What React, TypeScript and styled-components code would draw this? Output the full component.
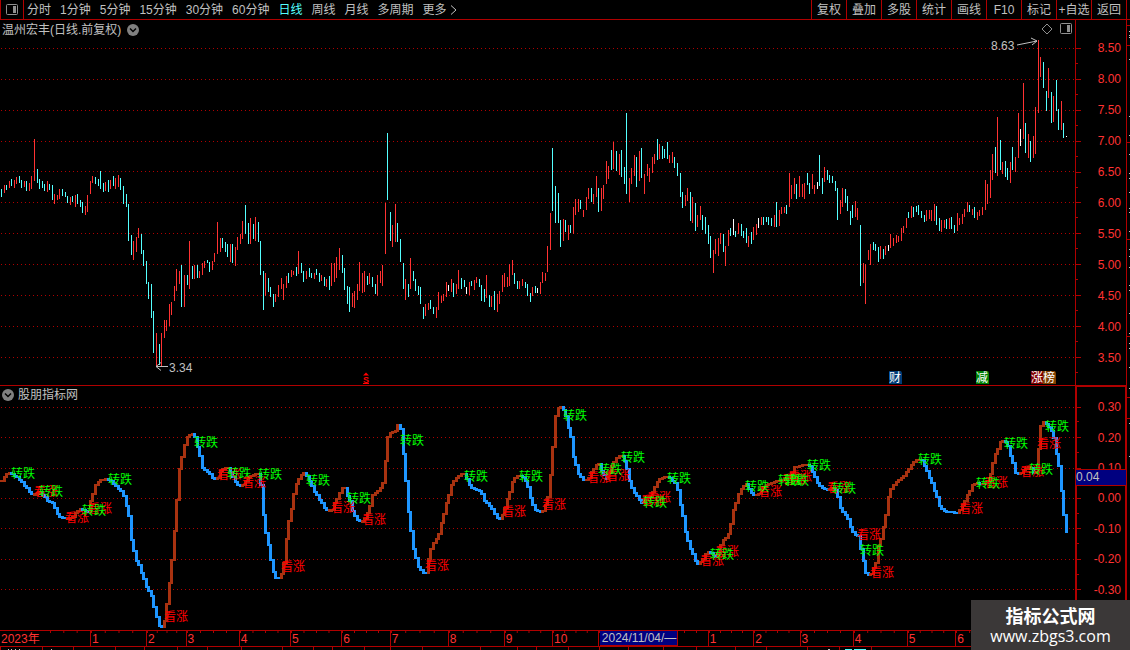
import styled, { createGlobalStyle } from 'styled-components'

const GlobalStyle = createGlobalStyle`
  * {
    box-sizing: border-box;
  }
  body {
    margin: 0;
    background: #000;
    color: #c0c0c0;
    font-family: 'Liberation Sans', 'Noto Sans CJK SC', sans-serif;
    font-size: 12px;
    line-height: 16px;
  }
  button {
    margin: 0;
    padding: 0;
    border: 0;
    background: none;
    color: inherit;
    font: inherit;
    white-space: nowrap;
    cursor: pointer;
  }
`

const line = '#b00000'

const Page = styled.div`
  position: relative;
  overflow: hidden;
`

const Toolbar = styled.header`
  display: flex;
  height: 20px;
  border-bottom: 1px solid ${line};
  padding-right: 3px;
`

const LayoutButton = styled.button`
  width: 24px;
  flex: none;
  display: flex;
  align-items: center;
  justify-content: center;
  border-left: 1px solid ${line};
  border-right: 1px solid ${line};
`

const Periods = styled.nav`
  flex: 1;
  display: flex;
  align-items: center;
  gap: 9px;
  padding-left: 3px;
`

const Period = styled.button<{ $active?: boolean }>`
  color: ${({ $active }) => ($active ? '#54ffff' : '#c0c0c0')};
`

const More = styled(Period)`
  display: flex;
  align-items: center;
  gap: 3px;
`

const Tools = styled.div`
  display: flex;
  border-right: 1px solid ${line};
`

const Tool = styled.button`
  width: 35px;
  border-left: 1px solid ${line};
`

const Body = styled.main`
  display: flex;
`

const Panels = styled.div`
  flex: 1;
  min-width: 0;
`

const Panel = styled.section`
  display: flex;
  &:first-child {
    border-bottom: 1px solid ${line};
  }
`

const Plot = styled.div`
  flex: 1;
  min-width: 0;
  position: relative;
  > svg {
    display: block;
    width: 100%;
    height: auto;
  }
`

const PlotTitle = styled.div<{ $reverse?: boolean }>`
  position: absolute;
  top: ${({ $reverse }) => ($reverse ? 1 : 2)}px;
  left: 2px;
  display: flex;
  flex-direction: ${({ $reverse }) => ($reverse ? 'row-reverse' : 'row')};
  align-items: center;
  gap: ${({ $reverse }) => ($reverse ? 4 : 6)}px;
`

const Fold = styled.button`
  display: flex;
`

const PlotTools = styled.div`
  position: absolute;
  top: 3px;
  right: 3px;
  display: flex;
  gap: 7px;
  > button {
    display: flex;
  }
`

const Axis = styled.ul<{ $thick?: boolean }>`
  position: relative;
  flex: none;
  width: 52px;
  margin: 0;
  padding: ${({ $thick }) => ($thick ? '5px 0 25px' : '13px 0 12px')};
  border: 0 solid ${line};
  border-width: ${({ $thick }) => ($thick ? '1px 2px 0 2px' : '0 1px')};
  list-style: none;
  display: flex;
  flex-direction: column;
`

const AxisRow = styled.li<{ $thick?: boolean }>`
  flex: 1;
  display: flex;
  align-items: center;
  justify-content: space-between;
  padding-right: ${({ $thick }) => ($thick ? 4 : 5)}px;
  color: #ff3232;
  background: linear-gradient(${line}, ${line}) left bottom / 2px 1px no-repeat;
  &::before {
    content: '';
    width: ${({ $thick }) => ($thick ? 4 : 5)}px;
    height: 1px;
    background: ${line};
  }
`

const Current = styled.li`
  position: absolute;
  top: 82px;
  left: 0;
  right: 0;
  height: 17px;
  line-height: 15px;
  margin: 0 -1px;
  border: 1px solid ${line};
  border-width: 1px 0;
  background: #000080;
`

const TimeAxis = styled.div`
  position: relative;
  display: flex;
  height: 17px;
  margin-right: 52px;
  border-top: 1px solid ${line};
  border-bottom: 1px solid ${line};
  color: #ff3232;
`

const Month = styled.div<{ $span: number; $ticks?: number; $open?: boolean }>`
  flex: ${({ $span }) => $span} 1 0;
  min-width: 0;
  padding-left: 1px;
  white-space: nowrap;
  border-left: ${({ $open }) => ($open ? '0' : `1px solid ${line}`)};
  background: ${({ $ticks }) =>
    $ticks
      ? `linear-gradient(90deg, ${line} 1px, transparent 1px) left top / ${100 / $ticks}% 2px repeat-x`
      : 'none'};
`

const DateMark = styled.time`
  position: absolute;
  top: -1px;
  left: 55.8%;
  height: 16px;
  padding: 0 1px 0 2px;
  border: 1px solid ${line};
  border-left: 0;
  line-height: 14px;
  color: #c0c0c0;
  background: #000080;
`

const Neighbour = styled.svg`
  display: block;
  flex: none;
`

const Watermark = styled.a`
  position: absolute;
  right: 0;
  bottom: 0;
  width: 159px;
  height: 50px;
  padding-top: 4px;
  background: #3b3838;
  color: #fff;
  text-align: center;
  text-decoration: none;
  font-family: 'Open Sans', 'Noto Sans', sans-serif;
  font-size: 16px;
  line-height: 20px;
  > strong {
    display: block;
    font-family: 'Noto Sans CJK SC', sans-serif;
    font-size: 18px;
    line-height: 22px;
  }
`

const periods = ['分时', '1分钟', '5分钟', '15分钟', '30分钟', '60分钟', '日线', '周线', '月线', '多周期']
const tools = ['复权', '叠加', '多股', '统计', '画线', 'F10', '标记', '+自选', '返回']
const prices = ['8.50', '8.00', '7.50', '7.00', '6.50', '6.00', '5.50', '5.00', '4.50', '4.00', '3.50']
const levels = ['0.30', '0.20', '0.10', '0.00', '-0.10', '-0.20', '-0.30']
const priceGrid = [28, 59, 90, 121, 151, 182, 213, 244, 275, 306, 337]
const levelGrid = [21, 51, 82, 112, 142, 173, 203]

const months: { label: string; span: number; ticks?: number; open?: boolean }[] = [
  { label: '2023年', span: 51, open: true },
  { label: '', span: 40, ticks: 3, open: true },
  { label: '1', span: 56, ticks: 4 },
  { label: '2', span: 39, ticks: 4 },
  { label: '3', span: 53, ticks: 4 },
  { label: '4', span: 51, ticks: 4 },
  { label: '5', span: 51, ticks: 4 },
  { label: '6', span: 48, ticks: 4 },
  { label: '7', span: 58, ticks: 4 },
  { label: '8', span: 56, ticks: 4 },
  { label: '9', span: 48, ticks: 4 },
  { label: '10', span: 46, ticks: 4 },
  { label: '', span: 62, ticks: 4 },
  { label: '', span: 48, ticks: 4, open: true },
  { label: '1', span: 45, ticks: 4 },
  { label: '2', span: 46, ticks: 4 },
  { label: '3', span: 53, ticks: 4 },
  { label: '4', span: 54, ticks: 4 },
  { label: '5', span: 48, ticks: 4 },
  { label: '6', span: 122, ticks: 9 },
]

// x top bottom colour
const bars = `
1 189 197 c,4 185 193 r,6 185 190 c,9 181 188 r,11 179 186 c,14 180 188 r,16 177 184 r,19 176 183 c,21 180 188 c,24 181 187 r,
26 181 191 c,29 183 191 r,31 176 189 r,34 139 181 r,37 169 183 c,39 179 189 c,42 181 188 c,44 184 191 c,47 181 192 r,49 184 190 c,
52 185 200 c,54 194 204 r,57 195 200 r,59 189 199 r,62 189 196 c,65 192 197 c,67 196 203 c,70 197 205 r,72 196 202 c,75 195 207 r,
77 194 204 c,80 200 207 c,82 202 213 c,85 206 215 r,87 195 212 r,90 181 194 r,92 176 183 r,95 177 184 c,98 179 186 c,100 171 189 c,
103 183 192 c,105 182 191 r,108 180 192 c,110 180 189 r,113 176 186 c,115 178 189 r,118 175 187 r,120 178 190 c,123 186 204 c,126 194 207 c,
128 204 241 c,131 235 255 c,133 241 260 r,136 237 252 r,138 228 238 r,141 234 254 c,143 250 266 c,146 261 284 c,148 282 299 c,151 284 318 c,
153 311 353 c,156 333 366 r,159 344 365 c,161 333 366 r,164 320 338 r,166 320 331 r,169 304 326 r,171 302 315 r,174 286 301 r,176 269 291 r,
179 271 284 r,181 265 307 c,184 275 307 r,187 275 285 c,189 241 289 r,192 266 279 c,194 265 279 r,197 265 278 c,199 271 278 r,202 263 275 r,
204 261 268 r,207 260 263 c,209 262 272 c,212 261 270 r,214 253 262 r,217 222 254 r,220 238 252 r,222 238 248 c,225 242 252 c,227 244 257 c,
230 244 262 r,232 244 263 c,235 247 266 r,237 237 250 r,240 234 244 r,242 221 239 r,245 205 234 c,248 223 244 c,250 218 244 r,253 224 239 c,
255 217 241 r,258 222 242 c,260 241 275 c,263 271 310 c,265 273 296 r,268 278 292 c,270 287 297 c,273 294 307 c,275 294 302 r,278 285 297 r,
281 278 289 r,283 284 300 r,286 276 288 r,288 273 283 c,291 270 277 r,293 271 275 r,296 267 276 c,298 251 274 r,301 263 273 c,303 271 282 c,
306 271 279 r,309 268 277 c,311 273 278 c,314 273 279 r,316 269 275 c,319 273 282 c,321 275 281 r,324 277 286 c,326 279 287 r,329 276 290 c,
331 263 286 r,334 263 282 r,336 257 278 r,339 248 270 r,342 255 273 c,344 268 290 c,347 286 304 c,349 287 312 c,352 293 307 r,354 291 308 r,
357 284 300 r,359 262 291 r,362 273 293 r,364 271 292 r,367 276 285 c,369 273 284 r,372 277 287 c,375 284 294 c,377 275 296 r,380 271 283 r,
382 265 286 r,385 203 254 r,387 133 200 c,390 212 241 c,392 225 247 r,395 204 242 r,397 223 242 c,400 239 262 c,403 263 289 c,405 279 300 r,
408 284 297 c,410 258 289 r,413 271 281 c,415 279 291 c,418 286 295 c,420 287 304 c,423 307 319 c,425 304 316 r,428 303 310 r,430 300 309 c,
433 307 314 c,436 307 318 r,438 292 310 r,441 296 303 r,443 294 301 r,446 282 297 r,448 285 291 w,451 279 292 r,453 283 297 c,456 284 294 r,
458 270 289 r,461 278 289 c,464 280 287 c,466 287 294 w,469 282 295 r,471 281 286 c,474 280 290 r,476 277 283 r,479 279 287 c,481 285 301 c,
484 289 302 c,486 275 298 r,489 295 307 c,491 296 307 r,494 291 310 c,497 294 312 r,499 291 304 r,502 275 292 r,504 273 287 r,507 277 287 r,
509 264 286 r,512 260 275 r,514 273 284 c,517 281 289 c,519 281 289 r,522 279 286 r,525 282 288 c,527 284 296 c,530 293 302 c,532 287 296 r,
535 286 293 c,537 288 293 w,540 282 294 r,542 272 283 r,545 273 281 r,547 246 272 r,550 213 250 r,552 148 211 c,555 186 223 c,558 193 223 c,
560 220 247 c,563 219 241 r,565 220 232 c,568 225 240 r,570 225 233 c,573 207 234 r,575 199 215 r,578 199 212 r,580 200 209 c,583 210 217 r,
586 197 210 r,588 188 199 r,591 188 202 c,593 194 204 r,596 176 197 r,598 188 212 c,601 188 211 r,603 185 199 r,606 161 184 r,608 166 179 r,
611 150 170 c,613 142 169 r,616 151 171 c,619 154 175 r,621 150 177 c,624 167 184 c,626 113 194 c,629 178 202 r,631 168 184 r,634 155 176 r,
636 157 187 c,639 151 181 r,641 148 178 c,644 174 194 r,647 164 176 r,649 168 182 r,652 157 173 r,654 154 164 r,657 139 160 c,659 144 159 r,
662 146 159 c,664 149 158 c,667 142 159 c,669 155 163 r,672 152 163 r,674 157 168 c,677 163 176 c,680 173 197 c,682 192 208 c,685 195 206 r,
687 188 201 r,690 192 221 c,692 197 223 r,695 203 231 c,697 215 227 r,700 206 220 r,702 215 230 c,705 217 234 c,708 225 244 c,710 236 258 c,
713 250 273 r,715 239 254 r,718 238 256 r,720 233 244 r,723 234 252 c,725 246 266 r,728 230 246 r,730 228 236 c,733 219 235 w,735 231 237 c,
738 223 234 r,741 224 236 c,743 231 238 c,746 228 243 c,748 236 247 r,751 232 244 c,753 227 240 r,756 224 235 r,758 218 228 w,761 217 225 r,
763 217 225 c,766 217 222 c,768 217 225 c,771 218 226 c,774 215 227 r,776 202 227 c,779 210 226 r,781 207 214 r,784 207 213 r,786 205 214 c,
789 173 207 r,791 185 199 r,794 178 194 r,796 184 199 c,799 176 197 r,802 184 197 r,804 183 199 r,807 173 185 c,809 183 194 c,812 174 189 r,
814 185 194 r,817 182 189 w,819 155 186 c,822 178 194 c,824 167 182 r,827 170 180 c,829 175 183 c,832 176 183 c,835 181 191 c,837 188 220 c,
840 200 214 r,842 188 207 r,845 189 203 c,847 196 211 c,850 211 225 c,852 205 218 c,855 201 217 r,857 208 220 r,860 225 286 c,863 263 283 r,
865 264 304 r,868 250 260 r,870 244 265 r,873 242 250 c,875 244 251 c,878 247 262 c,880 246 259 r,883 249 259 c,885 246 255 r,888 245 251 w,
890 234 248 r,893 238 246 r,896 235 243 r,898 236 242 r,901 228 241 r,903 226 233 r,906 218 228 r,908 212 218 c,911 206 218 r,913 207 217 c,
916 206 212 c,918 205 215 c,921 211 218 c,924 215 222 c,926 210 221 r,929 210 219 r,931 210 221 r,934 204 221 r,936 206 225 c,939 218 231 c,
941 220 232 r,944 220 228 r,946 219 229 c,949 218 229 r,951 217 229 c,954 225 233 c,957 213 231 r,959 218 225 r,962 214 224 r,964 209 217 r,
967 202 212 r,969 205 212 c,972 209 215 r,974 207 218 c,977 212 220 r,979 210 216 r,982 207 215 r,985 180 210 r,987 184 204 r,990 170 198 r,
992 154 180 r,995 147 173 c,997 117 176 r,1000 140 170 c,1002 162 174 r,1005 161 177 c,1007 168 180 c,1010 162 183 r,1012 147 170 c,1015 157 172 r,
1018 113 158 r,1020 129 146 w,1023 83 139 r,1025 123 153 c,1028 134 158 r,1030 141 162 c,1033 136 158 r,1035 107 154 r,1038 40 113 r,1040 57 77 r,
1043 62 88 c,1046 91 111 c,1048 68 98 r,1051 92 123 c,1053 96 122 r,1056 80 111 c,1058 109 130 c,1061 101 130 r,1063 123 138 c,1066 136 137 w
`
  .trim()
  .split(',')
  .map((row) => {
    const [x, top, bottom, tone] = row.trim().split(' ')
    return { x: Number(x), top: Number(top), bottom: Number(bottom), tone }
  })

const tones: Record<string, string> = { c: '#54ffff', r: '#ff3232', w: '#fff' }

// turning points of the indicator, u = rising run, d = falling run
const runs = `
u 1,480 4,476 6,473 9,472
d 11,473 16,476 19,479 24,485 29,491 33,494
u 35,493 37,492 40,490
d 42,494 47,500 52,502 55,510 60,517 65,517
u 68,518 72,516 77,510 80,508
d 82,509 88,511
u 90,500 93,489 96,482 100,479 106,478
d 109,479 113,483 117,487 122,492 126,505 129,520 131,539 134,556 138,564 143,578 147,588 151,595 153,606 156,616 159,625 162,626
u 164,620 166,603 169,582 171,559 174,530 176,499 179,468 181,456 184,444 187,436 190,433 192,433
d 194,436 197,446 199,455 202,467 207,471 212,477 216,478
u 218,476 220,470 223,467 227,467
d 229,470 233,478 237,484 241,485
u 243,483 248,476 252,474 256,472 258,473
d 261,489 263,514 265,532 268,544 270,559 273,571 275,577 278,577
u 281,573 284,556 286,538 288,520 291,508 293,493 296,483 299,475 303,472
d 306,475 309,480 312,488 316,494 320,500 324,507 328,510
u 331,509 335,500 338,493 342,487 345,487
d 347,495 350,503 353,514 357,519 361,521
u 363,520 366,515 369,505 371,495 375,492 380,487 383,480 385,460 387,436 391,431 395,430 397,424 399,424
d 400,428 402,440 404,466 406,493 409,520 411,540 414,552 416,562 419,568 422,572 425,572
u 427,563 430,548 433,542 437,537 440,526 443,513 446,502 449,490 452,481 457,476 461,473 464,473
d 466,478 470,486 475,489 480,490 483,499 489,505 494,513 498,518 501,518
u 503,510 507,498 510,488 513,478 517,475 520,475
d 523,476 526,482 529,494 532,504 536,510 541,511
u 544,508 547,496 549,484 551,463 553,428 556,409 559,406 562,406
d 564,412 567,422 570,436 572,452 575,464 578,473 581,478 585,480
u 588,477 592,469 596,464 599,463
d 600,468 603,474 606,478
u 608,472 613,461 616,457 620,454 622,455
d 624,460 627,472 629,480 632,490 637,496 641,502
u 643,500 650,495 654,486 658,479 663,476 667,476
d 670,478 675,483 678,492 681,510 684,526 687,540 690,548 694,558 698,564
u 701,560 704,553 709,551
d 712,553 715,556
u 718,552 721,540 725,537 728,533 731,518 734,505 738,493 742,486 746,483
d 748,488 751,492 755,495
u 758,493 762,486 768,483 776,480 784,479 790,474 794,466 802,464 808,464
d 811,468 815,478 819,485 824,488 828,489
u 830,488 834,486
d 836,492 838,500 841,510 846,515 850,526 853,533 858,535 860,548 863,560 865,572 869,575
u 872,570 875,562 878,545 881,535 884,521 887,500 890,488 894,483 898,479 904,474 909,466 914,460 920,458
d 923,462 927,472 931,482 935,492 938,503 942,510 948,511 957,512
u 960,508 964,500 968,492 972,484 977,482
d 980,483
u 985,482 989,478 992,462 996,450 1000,441 1004,439
d 1007,445 1011,458 1015,472 1019,473
u 1022,470 1027,466 1031,467
d 1033,472
u 1036,470 1038,448 1040,425 1042,421 1045,421
d 1047,424 1052,432 1055,447 1058,465 1061,490 1063,514 1066,531
`
  .trim()
  .split('\n')
  .flatMap((row) => {
    const [kind, ...points] = row.split(' ')
    return points.map((point) => {
      const [x, y] = point.split(',').map(Number)
      return { x, y: y - 386, up: kind === 'u' }
    })
  })

const levelAt = (x: number) => {
  const next = Math.max(runs.findIndex((p) => p.x >= x), 1)
  const a = runs[next - 1]
  const b = runs[next]
  const part = Math.min(Math.max((x - a.x) / (b.x - a.x), 0), 1)
  return { y: Math.round(a.y + (b.y - a.y) * part), up: b.up }
}

const steps = bars.map(({ x }, i) => {
  const now = levelAt(x)
  const before = i ? levelAt(bars[i - 1].x) : now
  return {
    x: x - 1,
    y: Math.min(now.y, before.y),
    height: Math.abs(now.y - before.y) + 2,
    up: now.up,
  }
})

// signals: down = 转跌, up = 看涨
const signals = `
r34,491 d11,473 d39,491 r65,517 r88,508 d82,510 d108,479 r164,616 d194,442 r217,474 d227,473 r242,482 d258,474 r281,566
d306,480 r331,507 d347,498 r362,519 d400,440 r425,565 d464,476 r502,511 d519,476 r542,504 d563,415 r587,477 r606,475 d598,469
d621,457 r641,500 r647,497 d643,502 d667,478 r700,560 r715,551 d710,554 r758,491 d745,486 r782,479 r788,476 d778,480 d785,480
d807,465 r827,487 d832,488 r857,534 d860,550 r870,572 d918,459 r959,508 r984,482 d976,483 d1004,443 r1020,471 d1029,469
r1037,443 d1045,426
`
  .trim()
  .split(/\s+/)
  .map((item) => {
    const [x, y] = item.slice(1).split(',').map(Number)
    return { x, y: y - 386, up: item[0] === 'r' }
  })

const events = [
  { x: 889, label: '财', color: '#003c78' },
  { x: 976, label: '减', color: '#008000' },
  { x: 1031, label: '涨', color: '#800000' },
  { x: 1043, label: '榜', color: '#804000' },
]

const bottomMarks = [0, 42, 73, 115, 144, 177, 207, 241, 282, 313, 332, 364, 390, 422, 480, 517, 536, 568, 599, 628, 663, 696, 735, 766, 807, 839, 871]
const sideMarks = [5, 25, 122, 219, 316, 377, 398]
const sideDots = [11, 15, 17, 39, 96, 115, 134, 153, 158, 172, 188, 192, 211, 229, 236, 247, 265, 270, 293, 313, 323, 328, 347, 368, 403, 436]

const Grid = ({ rows }: { rows: number[] }) => (
  <g stroke={line} strokeDasharray="1 3">
    {rows.map((y) => (
      <path key={y} d={`M1 ${y}.5H1075`} />
    ))}
  </g>
)

const FoldIcon = () => (
  <svg width="12" height="12" viewBox="0 0 12 12">
    <circle cx="6" cy="6" r="6" fill="#808080" />
    <path d="M3 4.500l3 3 3-3" fill="none" stroke="#000" strokeWidth="1.500" />
  </svg>
)

const PaneIcon = () => (
  <svg width="12" height="12" viewBox="0 0 12 12">
    <rect x="0.500" y="0.500" width="11" height="10" rx="1" fill="none" stroke="#909090" />
    <path d="M7 2h3v7H7z" fill="#909090" />
  </svg>
)

const PriceChart = () => (
  <svg viewBox="0 0 1075 365">
    <g shapeRendering="crispEdges">
      <Grid rows={priceGrid} />
      {bars.map(({ x, top, bottom, tone }) => (
        <rect key={x} x={x} y={top - 20} width="1" height={bottom - top} fill={tones[tone]} />
      ))}
    </g>
    <g fill="none" stroke="#c0c0c0">
      <path d="M1017 25l20-4M1031 18l6 3-5 4" />
      <path d="M156 346.500h12M161 342.500l-5 4 5 4" />
    </g>
    <g fill="#c0c0c0">
      <text x="991" y="30">8.63</text>
      <text x="169" y="352">3.34</text>
    </g>
    <path d="M363 355.500l3-3 3 3z" fill="#f00" />
    <path d="M363 363.500h6" stroke="#f00" />
    <text x="363" y="363" fill="#f00" fontSize="9" fontWeight="bold">S</text>
    {events.map(({ x, label, color }) => (
      <g key={x}>
        <path d={`M${x} 351h12l1 2v11h-13z`} fill={color} />
        <text x={x} y="362" fill="#fff">{label}</text>
      </g>
    ))}
  </svg>
)

const IndicatorChart = () => (
  <svg viewBox="0 0 1075 244">
    <g shapeRendering="crispEdges">
      <Grid rows={levelGrid} />
      {steps.map(({ x, y, height, up }) => (
        <rect key={x} x={x} y={y} width="3" height={height} fill={up ? '#a83210' : '#1e96ff'} />
      ))}
    </g>
    {signals.map(({ x, y, up }) => (
      <text key={`${x}-${y}`} x={x} y={y + 5} fill={up ? '#f00' : '#0f0'}>
        {up ? '看涨' : '转跌'}
      </text>
    ))}
  </svg>
)

const App = () => {
  return (
    <>
      <GlobalStyle />
      <Page>
        <Toolbar>
          <LayoutButton aria-label="layout">
            <PaneIcon />
          </LayoutButton>
          <Periods>
            {periods.map((name) => (
              <Period key={name} $active={name === '日线'}>{name}</Period>
            ))}
            <More>
              更多
              <svg width="7" height="10" viewBox="0 0 7 10">
                <path d="M1 0.500l5 4.500-5 4.500" fill="none" stroke="#c0c0c0" />
              </svg>
            </More>
          </Periods>
          <Tools>
            {tools.map((name) => (
              <Tool key={name}>{name}</Tool>
            ))}
          </Tools>
        </Toolbar>
        <Body>
          <Panels>
            <Panel>
              <Plot>
                <PriceChart />
                <PlotTitle>
                  <span>温州宏丰(日线.前复权)</span>
                  <Fold aria-label="fold price"><FoldIcon /></Fold>
                </PlotTitle>
                <PlotTools>
                  <button aria-label="mark">
                    <svg width="12" height="12" viewBox="0 0 12 12">
                      <path d="M6 1l5 5-5 5-5-5z" fill="none" stroke="#909090" />
                    </svg>
                  </button>
                  <button aria-label="side pane"><PaneIcon /></button>
                </PlotTools>
              </Plot>
              <Axis>
                {prices.map((price) => (
                  <AxisRow key={price}>{price}</AxisRow>
                ))}
              </Axis>
            </Panel>
            <Panel>
              <Plot>
                <IndicatorChart />
                <PlotTitle $reverse>
                  <span>股朋指标网</span>
                  <Fold aria-label="fold indicator"><FoldIcon /></Fold>
                </PlotTitle>
              </Plot>
              <Axis $thick>
                {levels.map((level) => (
                  <AxisRow key={level} $thick>{level}</AxisRow>
                ))}
                <Current>0.04</Current>
              </Axis>
            </Panel>
            <TimeAxis>
              {months.map(({ label, span, ticks, open }, i) => (
                <Month key={i} $span={span} $ticks={ticks} $open={open}>{label}</Month>
              ))}
              <DateMark>2024/11/04/—</DateMark>
            </TimeAxis>
          </Panels>
          <Neighbour width="3" height="610" viewBox="0 0 3 610" shapeRendering="crispEdges">
            {sideMarks.map((y) => (
              <rect key={y} y={y} width="3" height="1" fill={line} />
            ))}
            {sideDots.map((y) => (
              <rect key={y} x="2" y={y} width="1" height="1" fill="#c0c0c0" />
            ))}
          </Neighbour>
        </Body>
        <Neighbour width="1130" height="3" viewBox="0 0 1130 3" shapeRendering="crispEdges">
          {bottomMarks.map((x) => (
            <rect key={x} x={x} width="1" height="3" fill={line} />
          ))}
          <path d="M8 2h1v1h-1zM11 2h1v1h-1zM15 2h1v1h-1zM19 2h1v1h-1zM51 2h1v1h-1zM828 2h2v1h-2z" fill="#c0c0c0" />
          <path d="M845 2h7v1h-7zM854 2h12v1h-12z" fill="#54ffff" />
        </Neighbour>
        <Watermark href="#">
          <strong>指标公式网</strong>
          www.zbgs3.com
        </Watermark>
      </Page>
    </>
  )
}

export default App
